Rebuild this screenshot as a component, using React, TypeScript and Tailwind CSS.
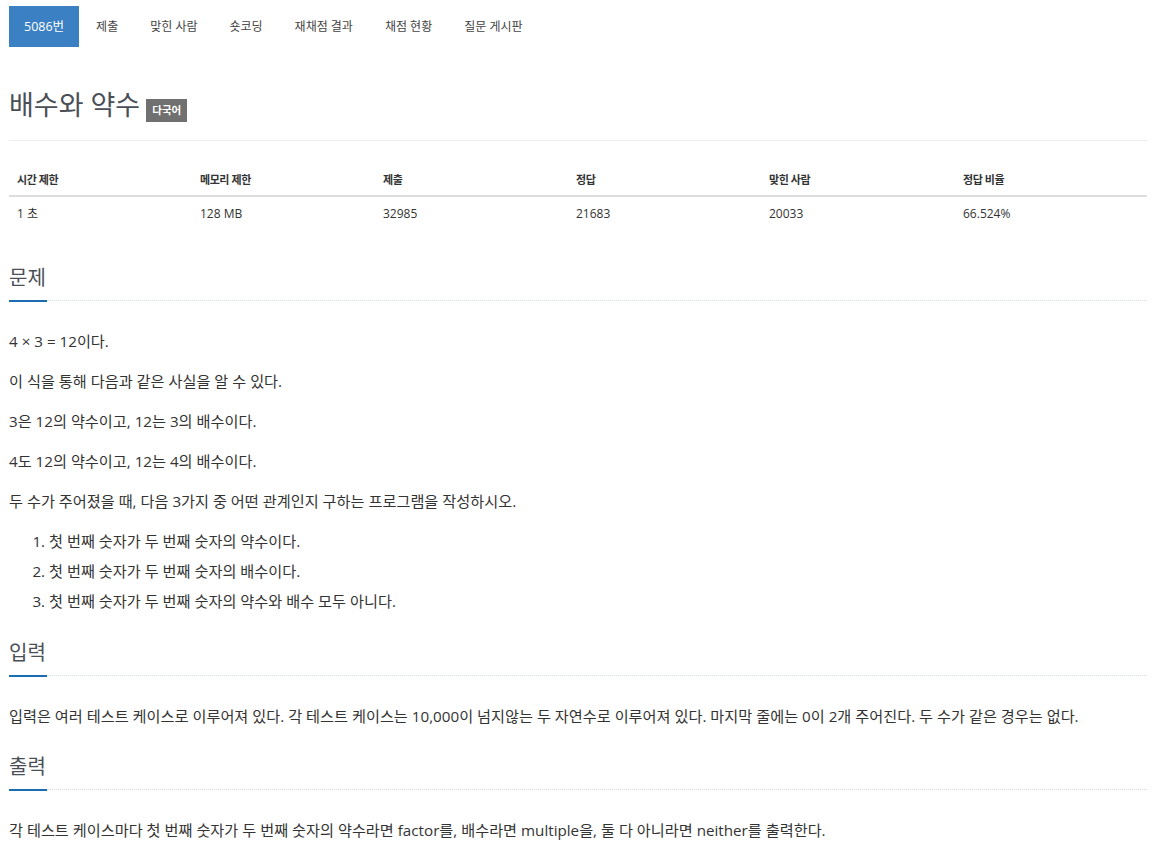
import React from "react";

const tabs = ["제출", "맞힌 사람", "숏코딩", "재채점 결과", "채점 현황", "질문 게시판"];

const stats = [
  ["시간 제한", "1 초"],
  ["메모리 제한", "128 MB"],
  ["제출", "32985"],
  ["정답", "21683"],
  ["맞힌 사람", "20033"],
  ["정답 비율", "66.524%"],
];

function SectionHead({ title }: { title: string }) {
  return (
    <div>
      <h2 className="text-[20px] leading-[24px] text-[#4a4f57] font-normal">{title}</h2>
      <div className="mt-[10px] flex items-start">
        <div className="w-[38px] h-[2px] bg-[#1a6db3]" />
        <div className="flex-1 border-t border-dotted border-[#d5dbe3]" />
      </div>
    </div>
  );
}

export default function App() {
  return (
    <div
      className="min-h-[846px] bg-white px-[9px] pt-[6px] text-[#333]"
      style={{ fontFamily: '"Open Sans", "Noto Sans CJK KR", sans-serif' }}
    >
      {/* nav pills */}
      <ul className="flex gap-[2px]">
        <li>
          <a className="block h-[41px] leading-[41px] px-[15px] bg-[#3b80c2] text-white text-[12.5px]">5086번</a>
        </li>
        {tabs.map((t) => (
          <li key={t}>
            <a className="block h-[41px] leading-[41px] px-[15px] text-[#444] text-[12px]">{t}</a>
          </li>
        ))}
      </ul>

      {/* title */}
      <div className="mt-[40px] pb-[17px] border-b border-[#eee] flex items-end">
        <h1 className="text-[27px] leading-[36px] text-[#4a4f57] font-normal">배수와 약수</h1>
        <span className="ml-[6px] mb-[1px] inline-flex items-center h-[23px] px-[6px] bg-[#707070] text-white text-[10.5px] font-bold">
          다국어
        </span>
      </div>

      {/* stats table */}
      <div className="mt-[22px] grid grid-cols-[183px_183px_193px_193px_194px_1fr]">
        {stats.map(([h]) => (
          <div
            key={h}
            className="px-[8px] pt-[8px] pb-[7px] leading-[17px] text-[11px] font-bold tracking-[-0.04em] text-[#333] border-b-2 border-[#ddd]"
          >
            {h}
          </div>
        ))}
        {stats.map(([h, v]) => (
          <div key={h + "v"} className="px-[8px] pt-[8px] pb-[8px] leading-[17px] text-[12px] text-[#333]">
            {v}
          </div>
        ))}
      </div>

      {/* problem */}
      <section className="mt-[36px]">
        <SectionHead title="문제" />
        <div className="mt-[24px] text-[15.2px] leading-[30px] text-[#333]">
          <p className="mb-[10px]">4 × 3 = 12이다.</p>
          <p className="mb-[10px]">이 식을 통해 다음과 같은 사실을 알 수 있다.</p>
          <p className="mb-[10px]">3은 12의 약수이고, 12는 3의 배수이다.</p>
          <p className="mb-[10px]">4도 12의 약수이고, 12는 4의 배수이다.</p>
          <p className="mb-[10px]">두 수가 주어졌을 때, 다음 3가지 중 어떤 관계인지 구하는 프로그램을 작성하시오.</p>
          <ol className="list-decimal pl-[40px] mb-[10px]">
            <li>첫 번째 숫자가 두 번째 숫자의 약수이다.</li>
            <li>첫 번째 숫자가 두 번째 숫자의 배수이다.</li>
            <li>첫 번째 숫자가 두 번째 숫자의 약수와 배수 모두 아니다.</li>
          </ol>
        </div>
      </section>

      <section className="mt-[25px]">
        <SectionHead title="입력" />
        <div className="mt-[24px] text-[15.2px] leading-[30px] text-[#333]">
          <p className="mb-[10px]">
            입력은 여러 테스트 케이스로 이루어져 있다. 각 테스트 케이스는 10,000이 넘지않는 두 자연수로 이루어져 있다. 마지막 줄에는 0이 2개 주어진다. 두 수가 같은 경우는 없다.
          </p>
        </div>
      </section>

      <section className="mt-[24px]">
        <SectionHead title="출력" />
        <div className="mt-[24px] text-[15.2px] leading-[30px] text-[#333]">
          <p className="mb-[10px]">
            각 테스트 케이스마다 첫 번째 숫자가 두 번째 숫자의 약수라면 factor를, 배수라면 multiple을, 둘 다 아니라면 neither를 출력한다.
          </p>
        </div>
      </section>
    </div>
  );
}
